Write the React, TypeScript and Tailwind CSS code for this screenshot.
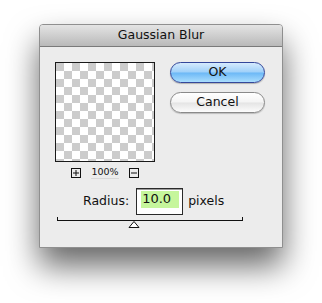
export default function App() {
  return (
    <div className="min-h-[303px] bg-white pt-[24px] pl-[39px] font-['DejaVu_Sans',sans-serif] text-[#111]">
      <div className="w-[244px] h-[224px] flex flex-col border border-[#8f8f8f] rounded-t-[4px] bg-[#ececec] shadow-[0_18px_32px_rgba(0,0,0,0.6)]">
        {/* title bar */}
        <div className="h-[22px] shrink-0 flex items-center justify-center rounded-t-[3px] border-b border-[#7a7a7a] bg-[linear-gradient(to_bottom,#e4e4e4,#b9b9b9)] text-[12.5px] text-[#111]">
          Gaussian Blur
        </div>

        <div className="flex pl-[15px] pt-[15px]">
          <div className="flex flex-col items-center w-[100px]">
            <div className="w-[100px] h-[100px] border border-[#1a1a1a] bg-[conic-gradient(#fff_25%,#ccc_0_50%,#fff_0_75%,#ccc_0)] bg-[length:16px_16px]" />
            <div className="flex items-center mt-[5px] gap-[10px]">
              <div className="w-[10px] h-[10px] border border-[#111] flex items-center justify-center">
                <svg width="8" height="8" viewBox="0 0 8 8"><path d="M4 1v6M1 4h6" stroke="#111" strokeWidth="1" /></svg>
              </div>
              <span className="text-[9.5px] leading-none border-b border-[#d8d8d8] pb-[1px]">100%</span>
              <div className="w-[10px] h-[10px] border border-[#111] flex items-center justify-center">
                <svg width="8" height="8" viewBox="0 0 8 8"><path d="M1 4h6" stroke="#111" strokeWidth="1" /></svg>
              </div>
            </div>
          </div>

          <div className="flex flex-col ml-[15px] gap-[9px]">
            <button className="w-[95px] h-[21px] rounded-full border border-[#34479a] bg-[linear-gradient(to_bottom,#d6ebfd_0%,#9fd0f9_48%,#6cb8f6_52%,#a9ddfd_100%)] text-[12.5px] leading-none shadow-[0_1px_1px_rgba(0,0,0,0.25)]">
              OK
            </button>
            <button className="w-[95px] h-[21px] rounded-full border border-[#8a8a8a] bg-[linear-gradient(to_bottom,#ffffff_0%,#f4f4f4_48%,#e4e4e4_52%,#fcfcfc_100%)] text-[12.5px] leading-none shadow-[0_1px_1px_rgba(0,0,0,0.2)]">
              Cancel
            </button>
          </div>
        </div>

        <div className="flex items-center pl-[43px] mt-[9px]">
          <span className="text-[12.5px]">Radius:</span>
          <div className="ml-[7px] w-[47px] h-[27px] border border-[#2a2a2a] bg-white shadow-[inset_0_1px_0_#9a9a9a] pt-[2px] pl-[4px]">
            <div className="w-[38px] h-[17px] bg-[#c6f69c] text-[13px] leading-[15px] pl-[1px]">10.0</div>
          </div>
          <span className="ml-[5px] text-[12.5px]">pixels</span>
        </div>

        <div className="ml-[17px] mt-[2px] w-[186px] h-[4px] border-x border-b border-[#111]" />
        <div className="ml-[88px]">
          <svg width="12" height="7" viewBox="0 0 12 7">
            <path d="M6 0.5L11 6.5H1Z" fill="#fff" stroke="#111" strokeWidth="1" />
          </svg>
        </div>
      </div>
    </div>
  );
}
